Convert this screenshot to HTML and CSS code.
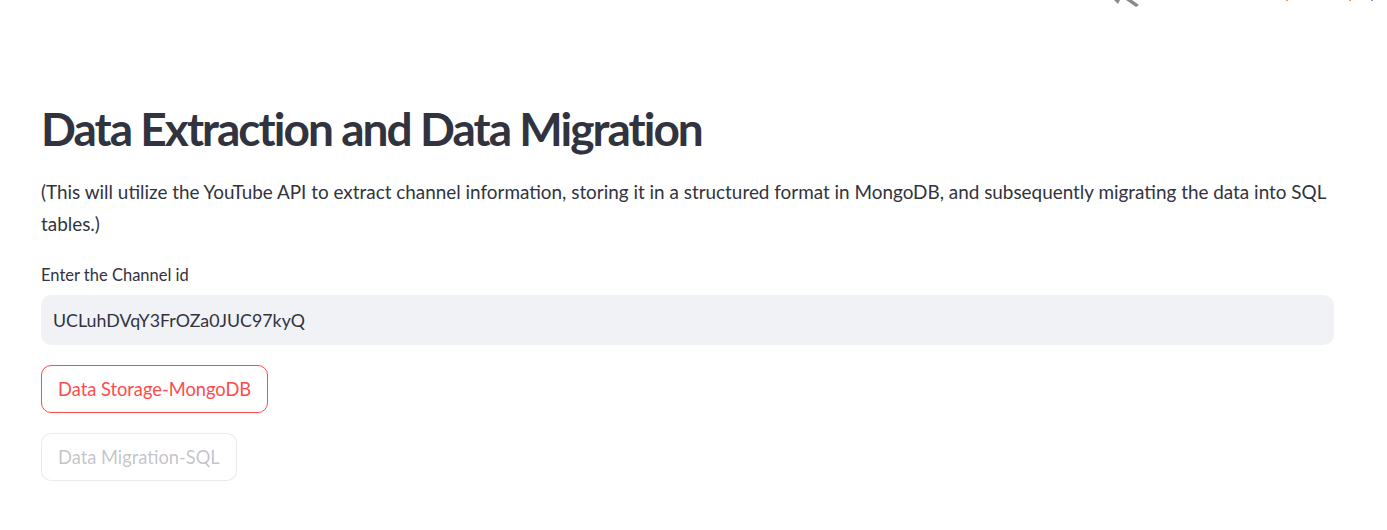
FILE: index.html
```
<!DOCTYPE html>
<html lang="en">
<head>
<meta charset="utf-8">
<title>Data Extraction and Data Migration</title>
<link rel="stylesheet" href="styles.css">
</head>
<body>
<div class="header">
  <svg class="status-icon" width="30" height="8" viewBox="0 0 30 8">
    <path d="M2 0 L8 0 L6 4 Z" fill="#8a8a8a"/>
    <path d="M14 0 L20 0 L27 5 L24 7 Z" fill="#8a8a8a"/>
  </svg>
  <span class="dot dot-a"></span>
  <span class="dot dot-b"></span>
  <span class="dot dot-c"></span>
</div>
<main class="main">
  <h1 class="title">Data Extraction and Data Migration</h1>
  <p class="desc">(This will utilize the YouTube API to extract channel information, storing it in a structured format in MongoDB, and subsequently migrating the data into SQL tables.)</p>
  <div class="field">
    <label class="label" for="cid">Enter the Channel id</label>
    <input id="cid" class="input" type="text" value="UCLuhDVqY3FrOZa0JUC97kyQ">
  </div>
  <div class="btn-row"><button class="btn btn-active">Data Storage-MongoDB</button></div>
  <div class="btn-row"><button class="btn btn-disabled" disabled>Data Migration-SQL</button></div>
</main>
</body>
</html>
```
FILE: styles.css
```
* { box-sizing: border-box; }
html, body {
  margin: 0;
  padding: 0;
  background: #ffffff;
  color: rgb(49, 51, 63);
  font-family: "Lato", "Noto Sans", sans-serif;
}
body { width: 1387px; height: 530px; overflow: hidden; position: relative; }
.header { position: absolute; top: 0; left: 0; right: 0; height: 8px; }
.status-icon { position: absolute; left: 1112px; top: 0; }
.dot { position: absolute; top: 0; width: 2px; height: 1px; }
.dot-a { left: 1286px; background: #e6a23c; }
.dot-b { left: 1349px; background: #e6a23c; }
.dot-c { left: 1371px; background: #7aa0d0; }
.main {
  width: 1293px;
  margin-left: 41px;
  padding-top: 96px;
  display: flex;
  flex-direction: column;
}
.title {
  margin: 0;
  font-size: 46px;
  font-weight: 700;
  line-height: 66px;
  letter-spacing: -1.95px;
  color: rgb(49, 51, 63);
}
.desc {
  margin: 14px 0 20px 0;
  font-size: 18.9px;
  line-height: 32px;
  color: rgb(49, 51, 63);
}
.field { display: flex; flex-direction: column; }
.label {
  font-size: 16.5px;
  line-height: 30px;
  height: 30px;
  margin-bottom: 5px;
  color: rgb(49, 51, 63);
}
.input {
  height: 50px;
  border: none;
  border-radius: 10px;
  background: #f0f2f6;
  padding: 0 12px;
  font-family: inherit;
  font-size: 17.8px;
  color: rgb(49, 51, 63);
  outline: none;
}
.btn-row { margin-top: 20px; display: flex; }
.btn {
  height: 48px;
  padding: 0 16px;
  border-radius: 10px;
  background: #ffffff;
  font-family: inherit;
  font-size: 18.3px;
  line-height: 46px;
}
.btn-active { border: 1px solid rgb(255, 75, 75); color: rgb(255, 75, 75); }
.btn-disabled { border: 1px solid rgba(49, 51, 63, 0.1); color: rgba(49, 51, 63, 0.3); }
```
